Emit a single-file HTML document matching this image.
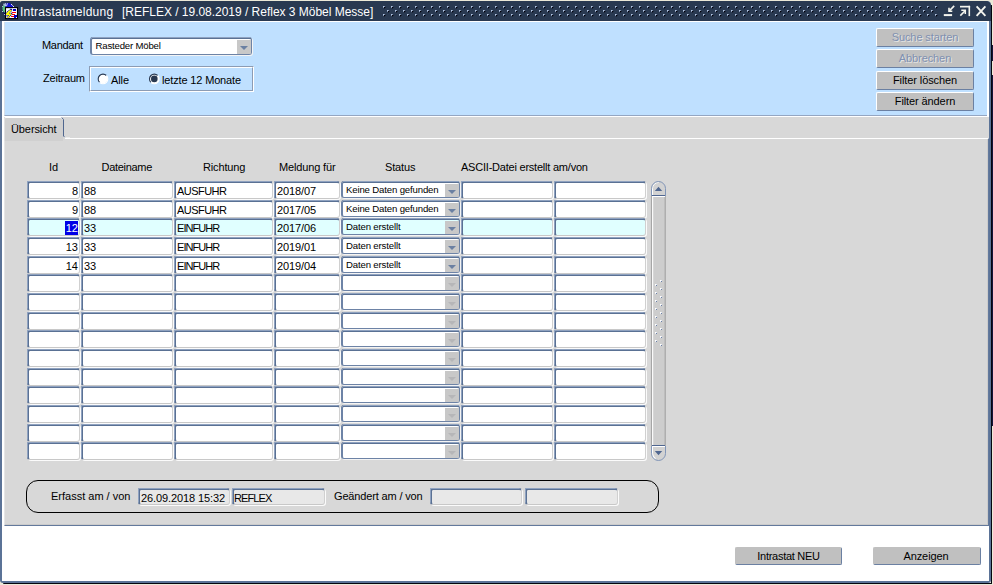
<!DOCTYPE html>
<html lang="de"><head><meta charset="utf-8"><title>Intrastatmeldung</title>
<style>
html,body{margin:0;padding:0}
body{width:993px;height:585px;overflow:hidden;position:relative;background:#ece9d8;font-family:"Liberation Sans",sans-serif;font-size:11px;color:#000}
div,span{position:absolute;box-sizing:border-box;white-space:pre}
.t{line-height:13px;height:13px}
.f{height:18px;background:#fff;border-top:2px solid #5a7194;border-left:2px solid #5a7194;border-right:1px solid #d0d0d0;border-bottom:1px solid #c8c8c8;border-radius:3px;box-shadow:1px 1px 0 #fbfbfb}
.f::before{content:"";position:absolute;left:-2px;top:-2px;right:1px;height:1px;background:#8fa2c0;border-radius:2px 2px 0 0}
.f::after{content:"";position:absolute;left:-2px;top:-2px;bottom:1px;width:1px;background:#8fa2c0;border-radius:2px 0 0 2px}
.ft{left:1px;top:2px;line-height:13px;height:13px}
.ct{left:3px;top:1px;font-size:9.6px;line-height:12px;height:12px;letter-spacing:-0.15px}
.c{height:18px;background:#fff;border:1px solid #6d83a6;border-top:2px solid #5a7194;border-left:2px solid #6d83a6;border-radius:3px;box-shadow:1px 1px 0 #f4f4f4}
.c::before{content:"";position:absolute;left:0;top:-2px;right:0;height:1px;background:#8fa2c0}
.cb{right:0;top:1px;bottom:0;width:14px;background:#c8c8c8;border-radius:0 0 1px 0}
.cb i{position:absolute;left:3px;top:6px;width:0;height:0;border-left:4px solid transparent;border-right:4px solid transparent;border-top:4px solid #6b80a2}
.cbd i{border-top-color:#b6b6b8}
.hl{background:#e0ffff}
.dis{background:#e8e8e8}
.btn{letter-spacing:-0.1px;height:19px;width:98px;background:#c0c0c0;border-top:1px solid #fff;border-left:1px solid #fff;border-right:1px solid #6b80a2;border-bottom:1px solid #6b80a2;border-radius:2px;text-align:center;line-height:17px}
.btn.d{color:#7f90b0;text-shadow:1px 1px 0 #e4e4e4}
</style></head>
<body>
<div class="" style="left:991px;top:5px;width:1px;height:578.6px;background:#05060f;border-radius:0 1px 3px 0"></div>
<div class="" style="left:992px;top:45px;width:1px;height:16px;background:#14143c"></div>
<div class="" style="left:992px;top:75px;width:1px;height:351px;background:#14143c"></div>
<div class="" style="left:3px;top:582.6px;width:989px;height:1px;background:#05060f;border-radius:0 0 3px 3px"></div>
<div class="" style="left:0px;top:1px;width:991px;height:581.7px;background:#5b7397;border-radius:3px 4px 3px 3px"></div>
<div class="" style="left:2px;top:21px;width:987.2px;height:559.9px;background:#fff"></div>
<div class="" style="left:0px;top:1px;width:991px;height:19.6px;background:#293951;border-radius:3px 5px 0 0"></div>
<span class="t" style="left:20px;top:5px;color:#fff;font-size:12px;line-height:15px;height:15px;letter-spacing:0.25px">Intrastatmeldung  </span>
<span class="t" style="left:122px;top:5px;color:#fff;font-size:12px;line-height:15px;height:15px;letter-spacing:-0.02px">[REFLEX / 19.08.2019 / Reflex 3 Möbel Messe]</span>
<svg style="position:absolute;left:383px;top:5px" width="555" height="12" shape-rendering="crispEdges">
<defs><pattern id="dp" x="0" y="0" width="8" height="8" patternUnits="userSpaceOnUse">
<rect x="0" y="1" width="1" height="1" fill="#b4c6e2"/><rect x="1" y="1" width="1" height="1" fill="#8496b4"/><rect x="0" y="2" width="1" height="1" fill="#8496b4"/><rect x="1" y="2" width="1" height="1" fill="#000008"/><rect x="2" y="2" width="1" height="1" fill="#1a2438"/><rect x="1" y="3" width="1" height="1" fill="#1a2438"/>
<rect x="4" y="5" width="1" height="1" fill="#b4c6e2"/><rect x="5" y="5" width="1" height="1" fill="#8496b4"/><rect x="4" y="6" width="1" height="1" fill="#8496b4"/><rect x="5" y="6" width="1" height="1" fill="#000008"/><rect x="6" y="6" width="1" height="1" fill="#1a2438"/><rect x="5" y="7" width="1" height="1" fill="#1a2438"/>
</pattern></defs><rect x="0" y="0" width="555" height="12" fill="url(#dp)"/></svg>
<svg style="position:absolute;left:942px;top:4px" width="46" height="14" viewBox="942 4 46 14" fill="none" stroke="#f4f4ee" stroke-width="1.600">
<path d="M943.800 15.100h8.300" stroke-width="2"/><path d="M954.200 5.900l-4.900 5"/><path d="M949 7.800V11.200H952.300"/>
<path d="M960 6.650H970.100" stroke-width="1.700"/><path d="M969.300 5.800V16.100" stroke-width="1.600"/><path d="M960.300 15.600L965.400 10.500"/><path d="M961.300 10.200H965.300V14" stroke-width="1.500"/>
<path d="M976.600 6.300l8.800 9.500M985.400 6.300l-8.800 9.500" stroke-width="1.900"/>
</svg>
<svg style="position:absolute;left:0;top:0" width="20" height="21" viewBox="0 0 20 21">
<defs><radialGradient id="gl" cx="0.6" cy="0.3" r="0.8"><stop offset="0" stop-color="#1414e0"/><stop offset="0.6" stop-color="#0a0ab4"/><stop offset="1" stop-color="#060640"/></radialGradient></defs>
<circle cx="8" cy="9" r="6" fill="url(#gl)"/>
<path d="M2.700 6.400c.5-1.400 1.600-2.500 3.200-3-.3 1.300-.6 2.400-.6 4 .1 1.300.4 2.800.9 4.300l-1.200 1.100c-.8-.3-1.500-.8-1.900-1.600-.8-1.400-1-3.300-.4-4.800z" fill="#5cc07c"/>
<path d="M3.200 4.600l2.600 1M4 3.400l2.200 2.600M5.600 3l.6 3.200M7.600 3.200l-1 2.600" stroke="#c4c4f4" stroke-width=".9"/>
<g fill="#e8e8f8" shape-rendering="crispEdges"><rect x="11" y="4" width="1" height="1"/><rect x="12" y="4.500" width="1" height="1" opacity=".7"/><rect x="13" y="6" width="1" height="1"/><rect x="2" y="6" width="1" height="1" opacity=".7"/><rect x="2" y="11" width="1" height="1" opacity=".8"/><rect x="4" y="14" width="1" height="1" opacity=".8"/></g>
<rect x="5.500" y="7.600" width="12" height="11" fill="#fff" stroke="#000" stroke-width="1.100"/>
<g shape-rendering="crispEdges"><rect x="13" y="9.200" width="3" height="1.600" fill="#0000c8"/>
<rect x="12" y="12" width="4" height="1" fill="#f00"/><rect x="12" y="14" width="3" height="1" fill="#f00"/><rect x="11" y="16" width="3" height="1" fill="#f00"/>
<rect x="14" y="15.400" width="3" height="2.600" fill="#0000c8"/><rect x="16" y="17" width="1" height="1" fill="#fff"/></g>
<path d="M11.300 9.700h-1.040L5.980 13.820v1.200h3.080L6.840 17.750l1.020.170 3.590-3.930v-.510H8.720l2.560-2.570z" fill="#ffff00" stroke="#000080" stroke-width="1.700" stroke-dasharray="1.200 .700" stroke-linejoin="round"/>
<path d="M11.300 9.700h-1.040L5.980 13.820v1.200h3.080L6.840 17.750l1.020.170 3.590-3.930v-.510H8.720l2.560-2.570z" fill="#ffff00"/>
</svg>
<div class="" style="left:4px;top:22px;width:983.4px;height:94px;background:#bfe0ff;border-bottom:1px solid #94a6c2;border-left:1px solid #d6dfea"></div>
<span class="t" style="left:42px;top:39px;letter-spacing:-0.3px">Mandant</span>
<span class="t" style="left:43px;top:72px;letter-spacing:-0.2px">Zeitraum</span>
<div class="c" style="left:90px;top:37px;width:162px;height:18px;"><span class="ct" style="left:3.5px;top:1px;letter-spacing:-0.18px">Rasteder Möbel</span><div class="cb"><i style="top:6px"></i></div></div>
<div class="" style="left:89px;top:66px;width:165px;height:26px;border:1px solid #8c9cb4;border-right-color:#fff;border-bottom-color:#fff"></div>
<div class="" style="left:90px;top:67px;width:163px;height:24px;border:1px solid #fff;border-right-color:#8c9cb4;border-bottom-color:#8c9cb4"></div>
<svg style="position:absolute;left:96px;top:72px" width="66" height="14" viewBox="96 72 66 14" fill="none">
<circle cx="103" cy="78.900" r="4.500" fill="#fff"/><path d="M99.600 82.300a4.800 4.800 0 0 1 6.800-6.800" stroke="#293951" stroke-width="1.100"/><path d="M106.400 75.500a4.800 4.800 0 0 1-6.800 6.800" stroke="#fff" stroke-width="1.100"/>
<circle cx="154.300" cy="78.900" r="4.500" fill="#fff"/><path d="M150.900 82.300a4.800 4.800 0 0 1 6.800-6.800" stroke="#293951" stroke-width="1.100"/><path d="M157.700 75.500a4.800 4.800 0 0 1-6.800 6.800" stroke="#fff" stroke-width="1.100"/><circle cx="154.300" cy="78.900" r="3.300" fill="#293951"/>
</svg>
<span class="t" style="left:111px;top:74px;letter-spacing:-0.1px">Alle</span>
<span class="t" style="left:162px;top:74px;letter-spacing:-0.15px">letzte 12 Monate</span>
<div class="btn d" style="left:876px;top:27.5px;width:98px;height:19px;">Suche starten</div>
<div class="btn d" style="left:876px;top:49px;width:98px;height:19px;">Abbrechen</div>
<div class="btn" style="left:876px;top:70.5px;width:98px;height:19px;">Filter löschen</div>
<div class="btn" style="left:876px;top:92px;width:98px;height:19px;">Filter ändern</div>
<div class="" style="left:4px;top:117px;width:985px;height:22px;background:#d8d8d8"></div>
<div class="" style="left:4px;top:138px;width:985px;height:387.5px;background:#d8d8d8;border-top:1px solid #fff;border-left:1px solid #e6e6e6;border-right:1px solid #63799c;border-bottom:1px solid #63799c;box-shadow:inset -1px -1px 0 #cbcbcb"></div>
<div class="" style="left:4px;top:117px;width:59px;height:23px;background:#d0d0d0;border-top:1px solid #fff;border-left:1px solid #e2e2e2;border-radius:2px 3px 0 0"></div>
<svg style="position:absolute;left:58px;top:116px" width="12" height="24" fill="none"><path d="M3.800 1.600L5.500 3.500V20L6.800 21.300" stroke="#50678f" stroke-width="1"/><path d="M6.500 22H12" stroke="#fff" stroke-width="1"/></svg>
<div class="" style="left:4px;top:138px;width:59px;height:3px;background:#d0d0d0;border-left:1px solid #e2e2e2"></div>
<div class="" style="left:63px;top:138px;width:1.5px;height:1px;background:#d8d8d8"></div>
<span class="t" style="left:11px;top:123px;letter-spacing:-0.1px">Übersicht</span>
<span class="t" style="left:49px;top:161px;letter-spacing:-0.15px;">Id</span>
<span class="t" style="left:101.5px;top:161px;letter-spacing:-0.15px;letter-spacing:-0.3px">Dateiname</span>
<span class="t" style="left:203px;top:161px;letter-spacing:-0.15px;">Richtung</span>
<span class="t" style="left:279px;top:161px;letter-spacing:-0.15px;">Meldung für</span>
<span class="t" style="left:385px;top:161px;letter-spacing:-0.15px;">Status</span>
<span class="t" style="left:461px;top:161px;letter-spacing:-0.15px;letter-spacing:-0.22px">ASCII-Datei erstellt am/von</span>
<div class="f" style="left:27px;top:181px;width:53px;height:18px;"><span class="ft" style="left:auto;right:1px">8</span></div>
<div class="f" style="left:81px;top:181px;width:92px;height:18px;"><span class="ft" style="letter-spacing:0">88</span></div>
<div class="f" style="left:174px;top:181px;width:99px;height:18px;"><span class="ft" style="letter-spacing:-0.55px">AUSFUHR</span></div>
<div class="f" style="left:274px;top:181px;width:66px;height:18px;"><span class="ft" style="letter-spacing:-0.1px">2018/07</span></div>
<div class="c" style="left:341px;top:181px;width:119px;height:17px;"><span class="ct">Keine Daten gefunden</span><div class="cb"><i></i></div></div>
<div class="f" style="left:461px;top:181px;width:92px;height:18px;"></div>
<div class="f" style="left:554px;top:181px;width:92px;height:18px;"></div>
<div class="f" style="left:27px;top:200px;width:53px;height:18px;"><span class="ft" style="left:auto;right:1px">9</span></div>
<div class="f" style="left:81px;top:200px;width:92px;height:18px;"><span class="ft" style="letter-spacing:0">88</span></div>
<div class="f" style="left:174px;top:200px;width:99px;height:18px;"><span class="ft" style="letter-spacing:-0.55px">AUSFUHR</span></div>
<div class="f" style="left:274px;top:200px;width:66px;height:18px;"><span class="ft" style="letter-spacing:-0.1px">2017/05</span></div>
<div class="c" style="left:341px;top:200px;width:119px;height:17px;"><span class="ct">Keine Daten gefunden</span><div class="cb"><i></i></div></div>
<div class="f" style="left:461px;top:200px;width:92px;height:18px;"></div>
<div class="f" style="left:554px;top:200px;width:92px;height:18px;"></div>
<div class="f hl" style="left:27px;top:218px;width:53px;height:18px;"><span class="ft" style="left:auto;right:1px;top:1px;height:14px;line-height:15px;background:#0000e6;color:#fff;padding:0 0 0 1px">12</span></div>
<div class="f hl" style="left:81px;top:218px;width:92px;height:18px;"><span class="ft" style="letter-spacing:0">33</span></div>
<div class="f hl" style="left:174px;top:218px;width:99px;height:18px;"><span class="ft" style="letter-spacing:-0.93px">EINFUHR</span></div>
<div class="f hl" style="left:274px;top:218px;width:66px;height:18px;"><span class="ft" style="letter-spacing:-0.1px">2017/06</span></div>
<div class="c hl" style="left:341px;top:218px;width:119px;height:17px;"><span class="ct">Daten erstellt</span><div class="cb"><i></i></div></div>
<div class="f hl" style="left:461px;top:218px;width:92px;height:18px;"></div>
<div class="f hl" style="left:554px;top:218px;width:92px;height:18px;"></div>
<div class="f" style="left:27px;top:237px;width:53px;height:18px;"><span class="ft" style="left:auto;right:1px">13</span></div>
<div class="f" style="left:81px;top:237px;width:92px;height:18px;"><span class="ft" style="letter-spacing:0">33</span></div>
<div class="f" style="left:174px;top:237px;width:99px;height:18px;"><span class="ft" style="letter-spacing:-0.93px">EINFUHR</span></div>
<div class="f" style="left:274px;top:237px;width:66px;height:18px;"><span class="ft" style="letter-spacing:-0.1px">2019/01</span></div>
<div class="c" style="left:341px;top:237px;width:119px;height:17px;"><span class="ct">Daten erstellt</span><div class="cb"><i></i></div></div>
<div class="f" style="left:461px;top:237px;width:92px;height:18px;"></div>
<div class="f" style="left:554px;top:237px;width:92px;height:18px;"></div>
<div class="f" style="left:27px;top:256px;width:53px;height:18px;"><span class="ft" style="left:auto;right:1px">14</span></div>
<div class="f" style="left:81px;top:256px;width:92px;height:18px;"><span class="ft" style="letter-spacing:0">33</span></div>
<div class="f" style="left:174px;top:256px;width:99px;height:18px;"><span class="ft" style="letter-spacing:-0.93px">EINFUHR</span></div>
<div class="f" style="left:274px;top:256px;width:66px;height:18px;"><span class="ft" style="letter-spacing:-0.1px">2019/04</span></div>
<div class="c" style="left:341px;top:256px;width:119px;height:17px;"><span class="ct">Daten erstellt</span><div class="cb"><i></i></div></div>
<div class="f" style="left:461px;top:256px;width:92px;height:18px;"></div>
<div class="f" style="left:554px;top:256px;width:92px;height:18px;"></div>
<div class="f" style="left:27px;top:274px;width:53px;height:18px;"></div>
<div class="f" style="left:81px;top:274px;width:92px;height:18px;"></div>
<div class="f" style="left:174px;top:274px;width:99px;height:18px;"></div>
<div class="f" style="left:274px;top:274px;width:66px;height:18px;"></div>
<div class="c" style="left:341px;top:274px;width:119px;height:17px;"><div class="cb cbd"><i></i></div></div>
<div class="f" style="left:461px;top:274px;width:92px;height:18px;"></div>
<div class="f" style="left:554px;top:274px;width:92px;height:18px;"></div>
<div class="f" style="left:27px;top:293px;width:53px;height:18px;"></div>
<div class="f" style="left:81px;top:293px;width:92px;height:18px;"></div>
<div class="f" style="left:174px;top:293px;width:99px;height:18px;"></div>
<div class="f" style="left:274px;top:293px;width:66px;height:18px;"></div>
<div class="c" style="left:341px;top:293px;width:119px;height:17px;"><div class="cb cbd"><i></i></div></div>
<div class="f" style="left:461px;top:293px;width:92px;height:18px;"></div>
<div class="f" style="left:554px;top:293px;width:92px;height:18px;"></div>
<div class="f" style="left:27px;top:312px;width:53px;height:18px;"></div>
<div class="f" style="left:81px;top:312px;width:92px;height:18px;"></div>
<div class="f" style="left:174px;top:312px;width:99px;height:18px;"></div>
<div class="f" style="left:274px;top:312px;width:66px;height:18px;"></div>
<div class="c" style="left:341px;top:312px;width:119px;height:17px;"><div class="cb cbd"><i></i></div></div>
<div class="f" style="left:461px;top:312px;width:92px;height:18px;"></div>
<div class="f" style="left:554px;top:312px;width:92px;height:18px;"></div>
<div class="f" style="left:27px;top:330px;width:53px;height:18px;"></div>
<div class="f" style="left:81px;top:330px;width:92px;height:18px;"></div>
<div class="f" style="left:174px;top:330px;width:99px;height:18px;"></div>
<div class="f" style="left:274px;top:330px;width:66px;height:18px;"></div>
<div class="c" style="left:341px;top:330px;width:119px;height:17px;"><div class="cb cbd"><i></i></div></div>
<div class="f" style="left:461px;top:330px;width:92px;height:18px;"></div>
<div class="f" style="left:554px;top:330px;width:92px;height:18px;"></div>
<div class="f" style="left:27px;top:349px;width:53px;height:18px;"></div>
<div class="f" style="left:81px;top:349px;width:92px;height:18px;"></div>
<div class="f" style="left:174px;top:349px;width:99px;height:18px;"></div>
<div class="f" style="left:274px;top:349px;width:66px;height:18px;"></div>
<div class="c" style="left:341px;top:349px;width:119px;height:17px;"><div class="cb cbd"><i></i></div></div>
<div class="f" style="left:461px;top:349px;width:92px;height:18px;"></div>
<div class="f" style="left:554px;top:349px;width:92px;height:18px;"></div>
<div class="f" style="left:27px;top:368px;width:53px;height:18px;"></div>
<div class="f" style="left:81px;top:368px;width:92px;height:18px;"></div>
<div class="f" style="left:174px;top:368px;width:99px;height:18px;"></div>
<div class="f" style="left:274px;top:368px;width:66px;height:18px;"></div>
<div class="c" style="left:341px;top:368px;width:119px;height:17px;"><div class="cb cbd"><i></i></div></div>
<div class="f" style="left:461px;top:368px;width:92px;height:18px;"></div>
<div class="f" style="left:554px;top:368px;width:92px;height:18px;"></div>
<div class="f" style="left:27px;top:386px;width:53px;height:18px;"></div>
<div class="f" style="left:81px;top:386px;width:92px;height:18px;"></div>
<div class="f" style="left:174px;top:386px;width:99px;height:18px;"></div>
<div class="f" style="left:274px;top:386px;width:66px;height:18px;"></div>
<div class="c" style="left:341px;top:386px;width:119px;height:17px;"><div class="cb cbd"><i></i></div></div>
<div class="f" style="left:461px;top:386px;width:92px;height:18px;"></div>
<div class="f" style="left:554px;top:386px;width:92px;height:18px;"></div>
<div class="f" style="left:27px;top:405px;width:53px;height:18px;"></div>
<div class="f" style="left:81px;top:405px;width:92px;height:18px;"></div>
<div class="f" style="left:174px;top:405px;width:99px;height:18px;"></div>
<div class="f" style="left:274px;top:405px;width:66px;height:18px;"></div>
<div class="c" style="left:341px;top:405px;width:119px;height:17px;"><div class="cb cbd"><i></i></div></div>
<div class="f" style="left:461px;top:405px;width:92px;height:18px;"></div>
<div class="f" style="left:554px;top:405px;width:92px;height:18px;"></div>
<div class="f" style="left:27px;top:424px;width:53px;height:18px;"></div>
<div class="f" style="left:81px;top:424px;width:92px;height:18px;"></div>
<div class="f" style="left:174px;top:424px;width:99px;height:18px;"></div>
<div class="f" style="left:274px;top:424px;width:66px;height:18px;"></div>
<div class="c" style="left:341px;top:424px;width:119px;height:17px;"><div class="cb cbd"><i></i></div></div>
<div class="f" style="left:461px;top:424px;width:92px;height:18px;"></div>
<div class="f" style="left:554px;top:424px;width:92px;height:18px;"></div>
<div class="f" style="left:27px;top:442px;width:53px;height:18px;"></div>
<div class="f" style="left:81px;top:442px;width:92px;height:18px;"></div>
<div class="f" style="left:174px;top:442px;width:99px;height:18px;"></div>
<div class="f" style="left:274px;top:442px;width:66px;height:18px;"></div>
<div class="c" style="left:341px;top:442px;width:119px;height:17px;"><div class="cb cbd"><i></i></div></div>
<div class="f" style="left:461px;top:442px;width:92px;height:18px;"></div>
<div class="f" style="left:554px;top:442px;width:92px;height:18px;"></div>
<svg style="position:absolute;left:650px;top:180px" width="18" height="283" viewBox="650 180 18 283" fill="none"><path d="M651.5 188.500a7 7 0 0 1 14 0V453.500a7 7 0 0 1-14 0z" fill="#cdcdcd"/><path d="M651.5 195.500V188.500a7 7 0 0 1 14 0V195.500z" fill="#d2d2d2"/><path d="M651.5 446.500h14V453.500a7 7 0 0 1-14 0z" fill="#d2d2d2"/><path d="M651.5 196V446M665.200 196V446" stroke="#a6a6a6" stroke-width="1.200"/><path d="M652.600 196.500V446" stroke="#fafafa" stroke-width="1.200"/><path d="M652.500 195V188.500a6 6 0 0 1 6-6" stroke="#fff"/><path d="M652.500 453.500V447" stroke="#fff"/><path d="M652.500 453.500a6 6 0 0 0 3 5.200" stroke="#fff" stroke-width="1.300"/><path d="M651.500 196V188.500a7 7 0 0 1 14 0V196" stroke="#8296b8"/><path d="M651.500 446V453.500a7 7 0 0 0 14 0V446" stroke="#8296b8"/><path d="M652 195.500h13M652 445.500h13" stroke="#4f6690"/><path d="M652 196.500h13M652 446.500h13" stroke="#fff"/><path d="M654.800 191h7.400l-3.700-4.300z" fill="#4f6690"/><path d="M654.800 451h7.400l-3.700 4.200z" fill="#4f6690"/><g shape-rendering="crispEdges"><rect x="660" y="280" width="1" height="1" fill="#fff"/><rect x="661" y="281" width="1" height="1" fill="#6a80a6"/><rect x="661" y="280" width="1" height="1" fill="#eceef2"/><rect x="660" y="281" width="1" height="1" fill="#eceef2"/><rect x="655" y="284" width="1" height="1" fill="#fff"/><rect x="656" y="285" width="1" height="1" fill="#6a80a6"/><rect x="656" y="284" width="1" height="1" fill="#eceef2"/><rect x="655" y="285" width="1" height="1" fill="#eceef2"/><rect x="660" y="288" width="1" height="1" fill="#fff"/><rect x="661" y="289" width="1" height="1" fill="#6a80a6"/><rect x="661" y="288" width="1" height="1" fill="#eceef2"/><rect x="660" y="289" width="1" height="1" fill="#eceef2"/><rect x="655" y="292" width="1" height="1" fill="#fff"/><rect x="656" y="293" width="1" height="1" fill="#6a80a6"/><rect x="656" y="292" width="1" height="1" fill="#eceef2"/><rect x="655" y="293" width="1" height="1" fill="#eceef2"/><rect x="660" y="296" width="1" height="1" fill="#fff"/><rect x="661" y="297" width="1" height="1" fill="#6a80a6"/><rect x="661" y="296" width="1" height="1" fill="#eceef2"/><rect x="660" y="297" width="1" height="1" fill="#eceef2"/><rect x="655" y="300" width="1" height="1" fill="#fff"/><rect x="656" y="301" width="1" height="1" fill="#6a80a6"/><rect x="656" y="300" width="1" height="1" fill="#eceef2"/><rect x="655" y="301" width="1" height="1" fill="#eceef2"/><rect x="660" y="304" width="1" height="1" fill="#fff"/><rect x="661" y="305" width="1" height="1" fill="#6a80a6"/><rect x="661" y="304" width="1" height="1" fill="#eceef2"/><rect x="660" y="305" width="1" height="1" fill="#eceef2"/><rect x="655" y="308" width="1" height="1" fill="#fff"/><rect x="656" y="309" width="1" height="1" fill="#6a80a6"/><rect x="656" y="308" width="1" height="1" fill="#eceef2"/><rect x="655" y="309" width="1" height="1" fill="#eceef2"/><rect x="660" y="312" width="1" height="1" fill="#fff"/><rect x="661" y="313" width="1" height="1" fill="#6a80a6"/><rect x="661" y="312" width="1" height="1" fill="#eceef2"/><rect x="660" y="313" width="1" height="1" fill="#eceef2"/><rect x="655" y="316" width="1" height="1" fill="#fff"/><rect x="656" y="317" width="1" height="1" fill="#6a80a6"/><rect x="656" y="316" width="1" height="1" fill="#eceef2"/><rect x="655" y="317" width="1" height="1" fill="#eceef2"/><rect x="660" y="320" width="1" height="1" fill="#fff"/><rect x="661" y="321" width="1" height="1" fill="#6a80a6"/><rect x="661" y="320" width="1" height="1" fill="#eceef2"/><rect x="660" y="321" width="1" height="1" fill="#eceef2"/><rect x="655" y="324" width="1" height="1" fill="#fff"/><rect x="656" y="325" width="1" height="1" fill="#6a80a6"/><rect x="656" y="324" width="1" height="1" fill="#eceef2"/><rect x="655" y="325" width="1" height="1" fill="#eceef2"/><rect x="660" y="328" width="1" height="1" fill="#fff"/><rect x="661" y="329" width="1" height="1" fill="#6a80a6"/><rect x="661" y="328" width="1" height="1" fill="#eceef2"/><rect x="660" y="329" width="1" height="1" fill="#eceef2"/><rect x="655" y="332" width="1" height="1" fill="#fff"/><rect x="656" y="333" width="1" height="1" fill="#6a80a6"/><rect x="656" y="332" width="1" height="1" fill="#eceef2"/><rect x="655" y="333" width="1" height="1" fill="#eceef2"/><rect x="660" y="336" width="1" height="1" fill="#fff"/><rect x="661" y="337" width="1" height="1" fill="#6a80a6"/><rect x="661" y="336" width="1" height="1" fill="#eceef2"/><rect x="660" y="337" width="1" height="1" fill="#eceef2"/><rect x="655" y="340" width="1" height="1" fill="#fff"/><rect x="656" y="341" width="1" height="1" fill="#6a80a6"/><rect x="656" y="340" width="1" height="1" fill="#eceef2"/><rect x="655" y="341" width="1" height="1" fill="#eceef2"/><rect x="660" y="344" width="1" height="1" fill="#fff"/><rect x="661" y="345" width="1" height="1" fill="#6a80a6"/><rect x="661" y="344" width="1" height="1" fill="#eceef2"/><rect x="660" y="345" width="1" height="1" fill="#eceef2"/></g></svg>
<div class="" style="left:26px;top:480px;width:633px;height:33px;border:1px solid #000;border-radius:12px"></div>
<span class="t" style="left:51px;top:490px;letter-spacing:0px">Erfasst am / von</span>
<span class="t" style="left:334px;top:490px;letter-spacing:-0.15px">Geändert am / von</span>
<div class="f dis" style="left:138px;top:488px;width:92px;height:17px;"><span class="ft" style="top:2px;letter-spacing:-0.1px">26.09.2018 15:32</span></div>
<div class="f dis" style="left:232px;top:488px;width:93px;height:17px;"><span class="ft" style="top:2px;left:0;letter-spacing:-0.9px">REFLEX</span></div>
<div class="f dis" style="left:430px;top:488px;width:92px;height:17px;"></div>
<div class="f dis" style="left:525px;top:488px;width:93px;height:17px;"></div>
<div class="btn" style="left:735px;top:547px;width:107px;height:18px;border-top-color:#c0c0c0;border-left-color:#c0c0c0;line-height:16px;letter-spacing:-0.28px">Intrastat NEU</div>
<div class="btn" style="left:873px;top:547px;width:108px;height:18px;border-top-color:#c0c0c0;border-left-color:#c0c0c0;line-height:16px;padding-right:2px">Anzeigen</div>
</body></html>
